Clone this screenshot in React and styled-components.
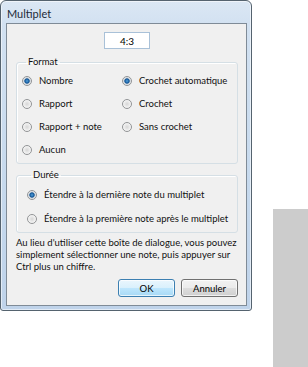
import React from "react";
import styled, { createGlobalStyle } from "styled-components";

const Global = createGlobalStyle`
  html, body { margin: 0; padding: 0; background: #fff; }
  body { font-family: Lato, "Noto Sans", sans-serif; }
  * { box-sizing: border-box; }
`;

const Page = styled.div`
  display: flex;
  width: 308px;
  height: 367px;
  background: #fff;
`;

const Window = styled.div`
  width: 252px;
  height: 311px;
  border: 1px solid #55636f;
  border-radius: 6px 6px 3px 3px;
  background: linear-gradient(to bottom, #dbe7f4 0, #d2e1f1 24px, #c6d9ed 60%, #bfd3ea 100%);
  box-shadow: inset 0 0 0 1px rgba(255, 255, 255, 0.55);
  display: flex;
  flex-direction: column;
  padding: 0 4px 4px 5px;
`;

const TitleBar = styled.div`
  height: 22px;
  display: flex;
  align-items: center;
  padding: 2px 0 0 1px;
  font-size: 11px;
  color: #1c2a38;
`;

const Client = styled.div`
  flex: 1;
  border: 1px solid #7f8b97;
  background: #f0f0f0;
  display: flex;
  flex-direction: column;
  padding: 8px 8px 0 9px;
  font-size: 9.5px;
  color: #111;
`;

const RatioInput = styled.div`
  align-self: center;
  width: 46px;
  height: 17px;
  border: 1px solid #a9c1d8;
  background: #fff;
  display: flex;
  align-items: center;
  justify-content: center;
  font-size: 10px;
  color: #000;
`;

const Group = styled.fieldset`
  margin: ${(p) => p.$mt}px 0 0;
  padding: ${(p) => p.$pad};
  border: 1px solid #d5dfe5;
  border-radius: 3px;
  min-width: 0;
  box-shadow: inset 1px 1px 0 #fff;
`;

const Legend = styled.legend`
  padding: 0 2px;
  margin-left: 4px;
  font-size: 9.5px;
  line-height: 12px;
`;

const FormatGrid = styled.div`
  display: grid;
  grid-template-columns: 100px 1fr;
  grid-auto-rows: 23px;
`;

const DurationList = styled.div`
  display: grid;
  grid-auto-rows: 24px;
`;

const Option = styled.div`
  display: flex;
  align-items: center;
  gap: 7px;
  white-space: nowrap;
  line-height: 12px;
`;

const Radio = styled.span`
  flex: none;
  width: 10px;
  height: 10px;
  border-radius: 50%;
  border: 1px solid #929496;
  background: ${(p) =>
    p.$checked
      ? "radial-gradient(circle at 50% 50%, #5fa8dc 0, #2773b5 1.2px, #1a5896 2.3px, #c9d1d8 3px, #eceef0 4px)"
      : "radial-gradient(circle at 50% 50%, #d6d6d6 0, #e6e6e6 2px, #f6f6f6 4px)"};
`;

const Note = styled.p`
  margin: 4px 0 0;
  line-height: 12px;
  white-space: nowrap;
`;

const Buttons = styled.div`
  display: flex;
  justify-content: flex-end;
  gap: 6px;
  margin-top: 6px;
`;

const Button = styled.button`
  width: 57px;
  height: 18px;
  padding: 0;
  font-family: inherit;
  font-size: 9.5px;
  color: #000;
  border-radius: 3px;
  border: 1px solid ${(p) => (p.$default ? "#3c7fb1" : "#707070")};
  background: ${(p) =>
    p.$default
      ? "linear-gradient(to bottom, #eaf6fd 0, #d9f0fc 50%, #bee6fd 51%, #a7d9f5 100%)"
      : "linear-gradient(to bottom, #f2f2f2 0, #ebebeb 50%, #dddddd 51%, #cfcfcf 100%)"};
  box-shadow: inset 0 0 0 1px rgba(255, 255, 255, 0.7);
`;

const SideBlock = styled.div`
  align-self: flex-end;
  margin-left: auto;
  width: 35px;
  height: 158px;
  background: #cccccc;
`;

function Choice({ checked, children }) {
  return (
    <Option>
      <Radio $checked={checked} />
      <span>{children}</span>
    </Option>
  );
}

export default function App() {
  return (
    <>
      <Global />
      <Page>
        <Window>
          <TitleBar>Multiplet</TitleBar>
          <Client>
            <RatioInput>4:3</RatioInput>
            <Group $mt={7} $pad="1px 4px 2px 5px">
              <Legend>Format</Legend>
              <FormatGrid>
                <Choice checked>Nombre</Choice>
                <Choice checked>Crochet automatique</Choice>
                <Choice>Rapport</Choice>
                <Choice>Crochet</Choice>
                <Choice>Rapport + note</Choice>
                <Choice>Sans crochet</Choice>
                <Choice>Aucun</Choice>
              </FormatGrid>
            </Group>
            <Group $mt={5} $pad="2px 4px 1px 10px">
              <Legend>Durée</Legend>
              <DurationList>
                <Choice checked>Étendre à la dernière note du multiplet</Choice>
                <Choice>Étendre à la première note après le multiplet</Choice>
              </DurationList>
            </Group>
            <Note>
              Au lieu d'utiliser cette boîte de dialogue, vous pouvez
              <br />
              simplement sélectionner une note, puis appuyer sur
              <br />
              Ctrl plus un chiffre.
            </Note>
            <Buttons>
              <Button $default>OK</Button>
              <Button>Annuler</Button>
            </Buttons>
          </Client>
        </Window>
        <SideBlock />
      </Page>
    </>
  );
}
